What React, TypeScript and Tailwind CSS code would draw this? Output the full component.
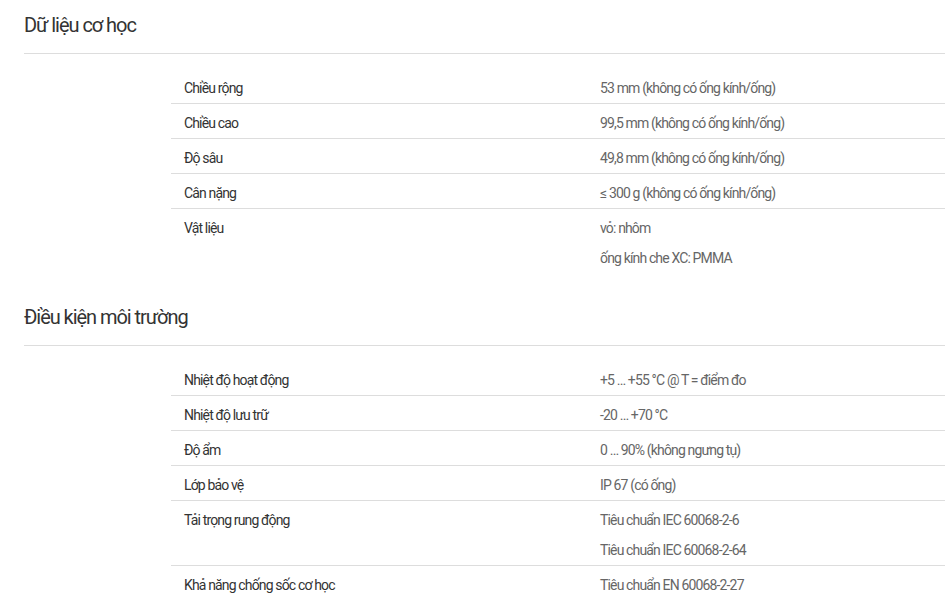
const sections: { title: string; rows: { label: string; values: string[] }[] }[] = [
  {
    title: "Dữ liệu cơ học",
    rows: [
      { label: "Chiều rộng", values: ["53 mm (không có ống kính/ống)"] },
      { label: "Chiều cao", values: ["99,5 mm (không có ống kính/ống)"] },
      { label: "Độ sâu", values: ["49,8 mm (không có ống kính/ống)"] },
      { label: "Cân nặng", values: ["≤ 300 g (không có ống kính/ống)"] },
      { label: "Vật liệu", values: ["vỏ: nhôm", "ống kính che XC: PMMA"] },
    ],
  },
  {
    title: "Điều kiện môi trường",
    rows: [
      { label: "Nhiệt độ hoạt động", values: ["+5 … +55 °C @ T = điểm đo"] },
      { label: "Nhiệt độ lưu trữ", values: ["-20 … +70 °C"] },
      { label: "Độ ẩm", values: ["0 … 90% (không ngưng tụ)"] },
      { label: "Lớp bảo vệ", values: ["IP 67 (có ống)"] },
      { label: "Tải trọng rung động", values: ["Tiêu chuẩn IEC 60068-2-6", "Tiêu chuẩn IEC 60068-2-64"] },
      { label: "Khả năng chống sốc cơ học", values: ["Tiêu chuẩn EN 60068-2-27"] },
    ],
  },
];

// ── Row ─────────────────────────────────────────────
function SpecRow({ label, values, first }: { label: string; values: string[]; first: boolean }) {
  return (
    <div className={`grid grid-cols-[416px_1fr] pt-[9px] pb-[5px] ${first ? "" : "border-t border-[#dddddd]"}`}>
      <div className="px-[13px] text-[#333333] leading-[20px]">{label}</div>
      <div className="px-[13px] text-[#666666]">
        {values.map((v, i) => (
          <p key={i} className={`leading-[20px] ${i < values.length - 1 ? "mb-[10px]" : ""}`}>{v}</p>
        ))}
      </div>
    </div>
  );
}

export default function App() {
  return (
    <div className="min-h-screen bg-white pl-6 font-['Roboto',sans-serif] text-[14px] tracking-[-0.85px]">
      {sections.map((s, si) => (
        <section key={s.title} className={si === 0 ? "pt-[11px]" : "pt-[30px]"}>
          <h2 className="text-[20px] leading-[28px] tracking-[-1.05px] text-[#333333] pb-[14px] border-b border-[#dddddd]">
            {s.title}
          </h2>
          <div className="ml-[147px] mt-[15px]">
            {s.rows.map((r, i) => (
              <SpecRow key={r.label} label={r.label} values={r.values} first={i === 0} />
            ))}
          </div>
        </section>
      ))}
    </div>
  );
}
